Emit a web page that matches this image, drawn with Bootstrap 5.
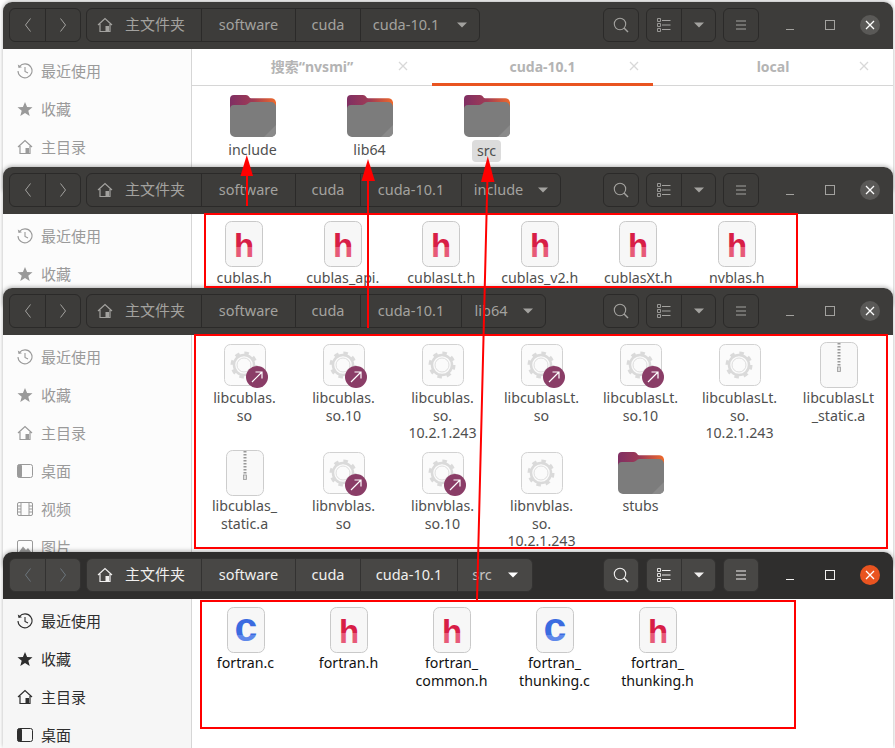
<!DOCTYPE html>
<html lang="zh">
<head>
<meta charset="utf-8">
<title>文件</title>
<link rel="stylesheet" href="https://cdn.jsdelivr.net/npm/bootstrap@5.3.0/dist/css/bootstrap.min.css">
<style>
html,body{margin:0;background:#fff;overflow:hidden}
body{font-family:"Noto Sans","Noto Sans CJK SC",sans-serif;font-size:14px;line-height:17px}
.desk{position:relative;width:895px;height:748px;overflow:hidden;background:#fff}
.win{position:absolute;left:3px;width:890px;overflow:hidden;border-radius:9px 9px 0 0;box-shadow:0 -1px 4px rgba(0,0,0,.3);background:#fff}
.w1{top:2px;height:190px}.w2{top:167px;height:140px}.w3{top:288px;height:280px}.w4{top:552px;height:196px}
.bar{height:47px;background:#3d3c3a;color:#a3a29f;padding:0 0 2px 6px;font-size:14.5px}
.w4 .bar{background:#2f2e2d;color:#f0efee}
.grp{height:34px;border:1px solid #2b2a29;border-radius:6px;overflow:hidden;flex:none}
.w4 .grp{background:#484745;border-color:#333231}
.cell{height:100%;border-left:1px solid #2b2a29;flex:none}
.cell:first-child{border-left:0}
.w4 .cell{border-left-color:#333231}
.navb{width:35px}
.pathg{margin-left:5px}
.s-home{width:114px;gap:4px;padding-left:10px;}.s-home span{font-size:15px}
.s-soft{width:94px}.s-cuda{width:65px}.s-ver{width:101px}
.w1 .s-ver{width:119px;gap:18px}.w4 .s-ver{width:97px}
.s-inc{width:99px;gap:15px}.s-lib{width:84px;gap:15px}.s-src{width:75px;gap:16px}
.w4 .s-src{color:#c4c3c1}
.tool{margin-left:7px}.tool1{margin-left:auto}
.btn1{width:34px}
.wctl{width:40px;flex:none}
.ctls{margin-left:11px;margin-right:3px}
.shot{background:#5a5957;border-radius:50%;width:20px;height:20px}
.w4 .shot{background:#e95420}
.side{width:189px;flex:none;background:#fcfcfc;border-right:1px solid #d6d6d6;color:#9a9a9a;padding:3px 0 0 14px}
.w4 .side{background:#f6f6f6;color:#2e2e2e}
.sitem{height:38px;gap:8px;font-size:15px;flex:none}
.sitem svg{flex:none}
.wbody{height:calc(100% - 47px)}
.tabs{height:37px;color:#b4b4b4;font-weight:700;border-bottom:1px solid #d6d6d6}
.tabi{width:240px;position:relative;flex:none;padding-bottom:2px}
.tabi.on{width:221px;border-bottom:3px solid #e95420;height:37px;padding-bottom:0}
.tabx{position:absolute;right:24px;top:12px}
.tabi.on .tabx{right:14px}
.files{display:grid;padding:6px 0 0 3px;color:#4f4f4f;font-size:14.2px;line-height:17.5px}
.w4 .files{color:#111;padding:7px 0 0 2px}
.c117{grid-template-columns:repeat(3,117px);padding-left:2px}
.c98{grid-template-columns:repeat(6,98.5px)}
.c99{grid-template-columns:repeat(7,99px);row-gap:7.500px}
.c103{grid-template-columns:repeat(5,103px)}
.fitem{text-align:center;white-space:nowrap}
.fitem span.lbl{position:relative}
.fitem svg{display:block;margin:0 auto 1px}
.c99 .fitem svg{margin-bottom:0}
.w4 .fitem svg{margin-bottom:0}
.picked{background:#dcdcdc;border-radius:4px;padding:2px 5px;margin-top:-1px;display:inline-block}
.marks{position:absolute;left:0;top:0;z-index:5;pointer-events:none}
</style>
</head>
<body>
<svg width="0" height="0" class="position-absolute">
<defs>
<linearGradient id="gh" gradientUnits="userSpaceOnUse" x1="0" y1="0" x2="0" y2="48"><stop offset=".56" stop-color="#d81e46"/><stop offset=".56" stop-color="#e75a78"/></linearGradient>
<linearGradient id="gc" gradientUnits="userSpaceOnUse" x1="0" y1="0" x2="0" y2="48"><stop offset=".6" stop-color="#3b6be0"/><stop offset=".6" stop-color="#5f88ea"/></linearGradient>
<linearGradient id="gtop" x1="0" y1="0" x2="1" y2="0"><stop offset="0" stop-color="#7f2f63"/><stop offset=".5" stop-color="#a03b55"/><stop offset="1" stop-color="#ef6a2b"/></linearGradient>
<symbol id="i-h" viewBox="0 0 48 48"><rect x="5.5" y="1.5" width="37" height="45" rx="6" fill="#f7f7f7" stroke="#c9c9c9"/><text x="24" y="36.5" text-anchor="middle" font-family="Liberation Sans" font-weight="700" font-size="33" fill="url(#gh)">h</text></symbol>
<symbol id="i-c" viewBox="0 0 48 48"><rect x="5.5" y="1.5" width="37" height="45" rx="6" fill="#f7f7f7" stroke="#c9c9c9"/><text x="24" y="34.5" text-anchor="middle" font-family="Liberation Sans" font-weight="700" font-size="41" fill="url(#gc)">c</text></symbol>
<symbol id="i-so" viewBox="0 0 48 48"><rect x="3.5" y="3.5" width="41" height="41" rx="6" fill="#fbfbfb" stroke="#d2d2d2"/><circle cx="23" cy="24" r="12" fill="none" stroke="#dadada" stroke-width="3" stroke-dasharray="4.500 4.925"/><circle cx="23" cy="24" r="10" fill="none" stroke="#dadada" stroke-width="2.500"/><circle cx="23" cy="24" r="7" fill="#fbfbfb" stroke="#dedede"/></symbol>
<symbol id="i-ln" viewBox="0 0 48 48"><use href="#i-so"/><circle cx="36" cy="36" r="11" fill="#8a3d67"/><path d="M31 41 41 31M34.500 31H41V37.500" fill="none" stroke="#fff" stroke-width="1.200"/></symbol>
<symbol id="i-zip" viewBox="0 0 48 48"><rect x="5.500" y="1.500" width="37" height="45" rx="6" fill="#f9f9f9" stroke="#cdcdcd"/><path d="M24 2V26" stroke="#999" stroke-width="3" stroke-dasharray="1.500 1.500"/><rect x="22.500" y="26" width="3" height="4.500" fill="#ddd" stroke="#999" stroke-width=".8"/></symbol>
<symbol id="i-dir" viewBox="0 0 48 48"><path d="M1 7a4 4 0 0 1 4-4h12c3 0 3 3 5 3.300h20a5 5 0 0 1 5 4V20H1Z" fill="url(#gtop)"/><path d="M1 17a4 4 0 0 1 4-4h11c3 0 4-3 6-3h20a5 5 0 0 1 5 5v25a5 5 0 0 1-5 5H6a5 5 0 0 1-5-5Z" fill="#7c7c7c"/><path d="M47 33V40a5 5 0 0 1-5 5H35Z" fill="#8a8a8a"/></symbol>
<symbol id="i-home" viewBox="0 0 16 16"><path d="M1 8 8 1.500 15 8M3 7V14.500H13V7" fill="none" stroke="currentColor" stroke-width="1.200"/><rect x="8.500" y="9" width="3.500" height="5.500" fill="currentColor"/></symbol>
<symbol id="i-clock" viewBox="0 0 16 16"><path d="M2.500 3.500A7 7 0 1 1 1 8" fill="none" stroke="currentColor" stroke-width="1.100"/><path d="M.8 1.500 1.500 5 5 4.300Z" fill="currentColor"/><path d="M8 4V8.500L11 10" fill="none" stroke="currentColor" stroke-width="1.100"/></symbol>
<symbol id="i-star" viewBox="0 0 16 16"><path d="M8 1 10.100 6 15.500 6.300 11.300 9.800 12.700 15 8 12.100 3.300 15 4.700 9.800 .5 6.300 5.900 6Z" fill="currentColor"/></symbol>
<symbol id="i-desk" viewBox="0 0 16 16"><rect x=".5" y="1.500" width="15" height="13" rx="2" fill="none" stroke="currentColor"/><rect x=".5" y="1.500" width="4.500" height="13" rx="1.500" fill="currentColor"/></symbol>
<symbol id="i-vid" viewBox="0 0 16 16"><rect x=".5" y="1.500" width="15" height="13" rx="1.500" fill="none" stroke="currentColor"/><path d="M4 2V14M12 2V14M.5 5H4M.5 8H4M.5 11H4M12 5H15.500M12 8H15.500M12 11H15.500" stroke="currentColor" fill="none"/></symbol>
<symbol id="i-pic" viewBox="0 0 16 16"><rect x=".5" y="1.500" width="15" height="13" rx="1.500" fill="none" stroke="currentColor"/><path d="M2 13 6 7.500 9 11 11 9 14 13Z" fill="currentColor"/></symbol>
<symbol id="i-back" viewBox="0 0 16 16"><path d="M10.500 1.500 5.500 8 10.500 14.500" fill="none" stroke="currentColor"/></symbol>
<symbol id="i-fwd" viewBox="0 0 16 16"><path d="M5.500 1.500 10.500 8 5.500 14.500" fill="none" stroke="currentColor"/></symbol>
<symbol id="i-find" viewBox="0 0 16 16"><circle cx="7" cy="7" r="5.700" fill="none" stroke="currentColor" stroke-width="1.100"/><path d="M11 11 15 15" stroke="currentColor" stroke-width="1.500"/></symbol>
<symbol id="i-list" viewBox="0 0 14 14"><path d="M5 2.500H13.500M5 7H13.500M5 11.500H13.500" stroke="currentColor"/><path d="M.5.500H3.500V3.500H.5ZM.5 5.500H3.500V8.500H.5ZM.5 10.500H3.500V13.500H.5Z" fill="none" stroke="currentColor" stroke-width=".9"/></symbol>
<symbol id="i-cart" viewBox="0 0 10 6"><path d="M0 .5H10L5 5.500Z" fill="currentColor"/></symbol>
<symbol id="i-menu" viewBox="0 0 12 12"><path d="M1 2H11M1 6H11M1 10H11" stroke="currentColor" fill="none"/></symbol>
<symbol id="i-min" viewBox="0 0 10 10"><path d="M1 9.500H9" stroke="currentColor" fill="none"/></symbol>
<symbol id="i-max" viewBox="0 0 10 10"><rect x=".5" y=".5" width="9" height="9" fill="none" stroke="currentColor"/></symbol>
<symbol id="i-x" viewBox="0 0 10 10"><path d="M1 1 9 9M9 1 1 9" stroke="currentColor" stroke-width="1.300" fill="none"/></symbol>
</defs>
</svg>

<div class="desk">

<!-- window 1 -->
<section class="win w1">
 <header class="bar d-flex align-items-center">
  <div class="grp d-flex">
   <div class="cell navb d-flex align-items-center justify-content-center"><svg width="16" height="16"><use href="#i-back"/></svg></div>
   <div class="cell navb d-flex align-items-center justify-content-center"><svg width="16" height="16"><use href="#i-fwd"/></svg></div>
  </div>
  <div class="grp pathg d-flex">
   <div class="cell s-home d-flex align-items-center"><svg width="16" height="16"><use href="#i-home"/></svg><span class="ms-2">主文件夹</span></div>
   <div class="cell s-soft d-flex align-items-center justify-content-center">software</div>
   <div class="cell s-cuda d-flex align-items-center justify-content-center">cuda</div>
   <div class="cell s-ver d-flex align-items-center justify-content-center">cuda-10.1<svg width="10" height="6"><use href="#i-cart"/></svg></div>
  </div>
  <div class="grp tool tool1 d-flex"><div class="cell btn1 d-flex align-items-center justify-content-center"><svg width="16" height="16"><use href="#i-find"/></svg></div></div>
  <div class="grp tool d-flex"><div class="cell btn1 d-flex align-items-center justify-content-center"><svg width="14" height="14"><use href="#i-list"/></svg></div><div class="cell btn1 d-flex align-items-center justify-content-center"><svg width="10" height="6"><use href="#i-cart"/></svg></div></div>
  <div class="grp tool d-flex"><div class="cell btn1 d-flex align-items-center justify-content-center"><svg width="12" height="12"><use href="#i-menu"/></svg></div></div>
  <div class="ctls d-flex align-items-center">
   <div class="wctl d-flex justify-content-center"><svg width="10" height="10"><use href="#i-min"/></svg></div>
   <div class="wctl d-flex justify-content-center"><svg width="10" height="10"><use href="#i-max"/></svg></div>
   <div class="wctl d-flex justify-content-center"><div class="shot d-flex align-items-center justify-content-center text-white"><svg width="10" height="10"><use href="#i-x"/></svg></div></div>
  </div>
 </header>
 <div class="wbody d-flex">
  <nav class="side d-flex flex-column">
   <div class="sitem d-flex align-items-center"><svg width="16" height="16"><use href="#i-clock"/></svg>最近使用</div>
   <div class="sitem d-flex align-items-center"><svg width="16" height="16"><use href="#i-star"/></svg>收藏</div>
   <div class="sitem d-flex align-items-center"><svg width="16" height="16"><use href="#i-home"/></svg>主目录</div>
  </nav>
  <main class="flex-grow-1">
   <div class="tabs d-flex">
    <div class="tabi d-flex align-items-center justify-content-center">搜索“nvsmi”<svg class="tabx" width="10" height="10" color="#d8d8d8"><use href="#i-x"/></svg></div>
    <div class="tabi on d-flex align-items-center justify-content-center">cuda-10.1<svg class="tabx" width="10" height="10" color="#d8d8d8"><use href="#i-x"/></svg></div>
    <div class="tabi d-flex align-items-center justify-content-center">local<svg class="tabx" width="10" height="10" color="#d8d8d8"><use href="#i-x"/></svg></div>
   </div>
   <div class="files c117">
    <div class="fitem"><svg width="48" height="48"><use href="#i-dir"/></svg>include</div>
    <div class="fitem"><svg width="48" height="48"><use href="#i-dir"/></svg>lib64</div>
    <div class="fitem"><svg width="48" height="48"><use href="#i-dir"/></svg><span class="picked">src</span></div>
   </div>
  </main>
 </div>
</section>

<!-- window 2 -->
<section class="win w2">
 <header class="bar d-flex align-items-center">
  <div class="grp d-flex">
   <div class="cell navb d-flex align-items-center justify-content-center"><svg width="16" height="16"><use href="#i-back"/></svg></div>
   <div class="cell navb d-flex align-items-center justify-content-center"><svg width="16" height="16"><use href="#i-fwd"/></svg></div>
  </div>
  <div class="grp pathg d-flex">
   <div class="cell s-home d-flex align-items-center"><svg width="16" height="16"><use href="#i-home"/></svg><span class="ms-2">主文件夹</span></div>
   <div class="cell s-soft d-flex align-items-center justify-content-center">software</div>
   <div class="cell s-cuda d-flex align-items-center justify-content-center">cuda</div>
   <div class="cell s-ver d-flex align-items-center justify-content-center">cuda-10.1</div>
   <div class="cell s-inc d-flex align-items-center justify-content-center">include<svg width="10" height="6"><use href="#i-cart"/></svg></div>
  </div>
  <div class="grp tool tool1 d-flex"><div class="cell btn1 d-flex align-items-center justify-content-center"><svg width="16" height="16"><use href="#i-find"/></svg></div></div>
  <div class="grp tool d-flex"><div class="cell btn1 d-flex align-items-center justify-content-center"><svg width="14" height="14"><use href="#i-list"/></svg></div><div class="cell btn1 d-flex align-items-center justify-content-center"><svg width="10" height="6"><use href="#i-cart"/></svg></div></div>
  <div class="grp tool d-flex"><div class="cell btn1 d-flex align-items-center justify-content-center"><svg width="12" height="12"><use href="#i-menu"/></svg></div></div>
  <div class="ctls d-flex align-items-center">
   <div class="wctl d-flex justify-content-center"><svg width="10" height="10"><use href="#i-min"/></svg></div>
   <div class="wctl d-flex justify-content-center"><svg width="10" height="10"><use href="#i-max"/></svg></div>
   <div class="wctl d-flex justify-content-center"><div class="shot d-flex align-items-center justify-content-center text-white"><svg width="10" height="10"><use href="#i-x"/></svg></div></div>
  </div>
 </header>
 <div class="wbody d-flex">
  <nav class="side d-flex flex-column">
   <div class="sitem d-flex align-items-center"><svg width="16" height="16"><use href="#i-clock"/></svg>最近使用</div>
   <div class="sitem d-flex align-items-center"><svg width="16" height="16"><use href="#i-star"/></svg>收藏</div>
  </nav>
  <main class="flex-grow-1">
   <div class="files c98">
    <div class="fitem"><svg width="48" height="48"><use href="#i-h"/></svg>cublas.h</div>
    <div class="fitem"><svg width="48" height="48"><use href="#i-h"/></svg>cublas_api.</div>
    <div class="fitem"><svg width="48" height="48"><use href="#i-h"/></svg>cublasLt.h</div>
    <div class="fitem"><svg width="48" height="48"><use href="#i-h"/></svg>cublas_v2.h</div>
    <div class="fitem"><svg width="48" height="48"><use href="#i-h"/></svg>cublasXt.h</div>
    <div class="fitem"><svg width="48" height="48"><use href="#i-h"/></svg>nvblas.h</div>
   </div>
  </main>
 </div>
</section>

<!-- window 3 -->
<section class="win w3">
 <header class="bar d-flex align-items-center">
  <div class="grp d-flex">
   <div class="cell navb d-flex align-items-center justify-content-center"><svg width="16" height="16"><use href="#i-back"/></svg></div>
   <div class="cell navb d-flex align-items-center justify-content-center"><svg width="16" height="16"><use href="#i-fwd"/></svg></div>
  </div>
  <div class="grp pathg d-flex">
   <div class="cell s-home d-flex align-items-center"><svg width="16" height="16"><use href="#i-home"/></svg><span class="ms-2">主文件夹</span></div>
   <div class="cell s-soft d-flex align-items-center justify-content-center">software</div>
   <div class="cell s-cuda d-flex align-items-center justify-content-center">cuda</div>
   <div class="cell s-ver d-flex align-items-center justify-content-center">cuda-10.1</div>
   <div class="cell s-lib d-flex align-items-center justify-content-center">lib64<svg width="10" height="6"><use href="#i-cart"/></svg></div>
  </div>
  <div class="grp tool tool1 d-flex"><div class="cell btn1 d-flex align-items-center justify-content-center"><svg width="16" height="16"><use href="#i-find"/></svg></div></div>
  <div class="grp tool d-flex"><div class="cell btn1 d-flex align-items-center justify-content-center"><svg width="14" height="14"><use href="#i-list"/></svg></div><div class="cell btn1 d-flex align-items-center justify-content-center"><svg width="10" height="6"><use href="#i-cart"/></svg></div></div>
  <div class="grp tool d-flex"><div class="cell btn1 d-flex align-items-center justify-content-center"><svg width="12" height="12"><use href="#i-menu"/></svg></div></div>
  <div class="ctls d-flex align-items-center">
   <div class="wctl d-flex justify-content-center"><svg width="10" height="10"><use href="#i-min"/></svg></div>
   <div class="wctl d-flex justify-content-center"><svg width="10" height="10"><use href="#i-max"/></svg></div>
   <div class="wctl d-flex justify-content-center"><div class="shot d-flex align-items-center justify-content-center text-white"><svg width="10" height="10"><use href="#i-x"/></svg></div></div>
  </div>
 </header>
 <div class="wbody d-flex">
  <nav class="side d-flex flex-column">
   <div class="sitem d-flex align-items-center"><svg width="16" height="16"><use href="#i-clock"/></svg>最近使用</div>
   <div class="sitem d-flex align-items-center"><svg width="16" height="16"><use href="#i-star"/></svg>收藏</div>
   <div class="sitem d-flex align-items-center"><svg width="16" height="16"><use href="#i-home"/></svg>主目录</div>
   <div class="sitem d-flex align-items-center"><svg width="16" height="16"><use href="#i-desk"/></svg>桌面</div>
   <div class="sitem d-flex align-items-center"><svg width="16" height="16"><use href="#i-vid"/></svg>视频</div>
   <div class="sitem d-flex align-items-center"><svg width="16" height="16"><use href="#i-pic"/></svg>图片</div>
  </nav>
  <main class="flex-grow-1">
   <div class="files c99">
    <div class="fitem"><svg width="48" height="48"><use href="#i-ln"/></svg>libcublas.<br>so</div>
    <div class="fitem"><svg width="48" height="48"><use href="#i-ln"/></svg>libcublas.<br>so.10</div>
    <div class="fitem"><svg width="48" height="48"><use href="#i-so"/></svg>libcublas.<br>so.<br>10.2.1.243</div>
    <div class="fitem"><svg width="48" height="48"><use href="#i-ln"/></svg>libcublasLt.<br>so</div>
    <div class="fitem"><svg width="48" height="48"><use href="#i-ln"/></svg>libcublasLt.<br>so.10</div>
    <div class="fitem"><svg width="48" height="48"><use href="#i-so"/></svg>libcublasLt.<br>so.<br>10.2.1.243</div>
    <div class="fitem"><svg width="48" height="48"><use href="#i-zip"/></svg>libcublasLt<br>_static.a</div>
    <div class="fitem"><svg width="48" height="48"><use href="#i-zip"/></svg>libcublas_<br>static.a</div>
    <div class="fitem"><svg width="48" height="48"><use href="#i-ln"/></svg>libnvblas.<br>so</div>
    <div class="fitem"><svg width="48" height="48"><use href="#i-ln"/></svg>libnvblas.<br>so.10</div>
    <div class="fitem"><svg width="48" height="48"><use href="#i-so"/></svg>libnvblas.<br>so.<br>10.2.1.243</div>
    <div class="fitem"><svg width="48" height="48"><use href="#i-dir"/></svg>stubs</div>
   </div>
  </main>
 </div>
</section>

<!-- window 4 (focused) -->
<section class="win w4">
 <header class="bar d-flex align-items-center">
  <div class="grp d-flex">
   <div class="cell navb d-flex align-items-center justify-content-center text-secondary"><svg width="16" height="16"><use href="#i-back"/></svg></div>
   <div class="cell navb d-flex align-items-center justify-content-center text-secondary"><svg width="16" height="16"><use href="#i-fwd"/></svg></div>
  </div>
  <div class="grp pathg d-flex">
   <div class="cell s-home d-flex align-items-center"><svg width="16" height="16"><use href="#i-home"/></svg><span class="ms-2">主文件夹</span></div>
   <div class="cell s-soft d-flex align-items-center justify-content-center">software</div>
   <div class="cell s-cuda d-flex align-items-center justify-content-center">cuda</div>
   <div class="cell s-ver d-flex align-items-center justify-content-center">cuda-10.1</div>
   <div class="cell s-src d-flex align-items-center justify-content-center">src<svg class="text-white" width="10" height="6"><use href="#i-cart"/></svg></div>
  </div>
  <div class="grp tool tool1 d-flex"><div class="cell btn1 d-flex align-items-center justify-content-center"><svg width="16" height="16"><use href="#i-find"/></svg></div></div>
  <div class="grp tool d-flex"><div class="cell btn1 d-flex align-items-center justify-content-center"><svg width="14" height="14"><use href="#i-list"/></svg></div><div class="cell btn1 d-flex align-items-center justify-content-center"><svg width="10" height="6"><use href="#i-cart"/></svg></div></div>
  <div class="grp tool d-flex"><div class="cell btn1 d-flex align-items-center justify-content-center"><svg width="12" height="12"><use href="#i-menu"/></svg></div></div>
  <div class="ctls d-flex align-items-center">
   <div class="wctl d-flex justify-content-center"><svg width="10" height="10"><use href="#i-min"/></svg></div>
   <div class="wctl d-flex justify-content-center"><svg width="10" height="10"><use href="#i-max"/></svg></div>
   <div class="wctl d-flex justify-content-center"><div class="shot d-flex align-items-center justify-content-center text-white"><svg width="10" height="10"><use href="#i-x"/></svg></div></div>
  </div>
 </header>
 <div class="wbody d-flex">
  <nav class="side d-flex flex-column">
   <div class="sitem d-flex align-items-center"><svg width="16" height="16"><use href="#i-clock"/></svg>最近使用</div>
   <div class="sitem d-flex align-items-center"><svg width="16" height="16"><use href="#i-star"/></svg>收藏</div>
   <div class="sitem d-flex align-items-center"><svg width="16" height="16"><use href="#i-home"/></svg>主目录</div>
   <div class="sitem d-flex align-items-center"><svg width="16" height="16"><use href="#i-desk"/></svg>桌面</div>
  </nav>
  <main class="flex-grow-1">
   <div class="files c103">
    <div class="fitem"><svg width="48" height="48"><use href="#i-c"/></svg>fortran.c</div>
    <div class="fitem"><svg width="48" height="48"><use href="#i-h"/></svg>fortran.h</div>
    <div class="fitem"><svg width="48" height="48"><use href="#i-h"/></svg>fortran_<br>common.h</div>
    <div class="fitem"><svg width="48" height="48"><use href="#i-c"/></svg>fortran_<br>thunking.c</div>
    <div class="fitem"><svg width="48" height="48"><use href="#i-h"/></svg>fortran_<br>thunking.h</div>
   </div>
  </main>
 </div>
</section>

<svg class="marks" width="895" height="748" fill="none" stroke="#f00" stroke-width="2">
 <rect x="205" y="214" width="592" height="73"/>
 <rect x="195" y="335" width="692" height="213"/>
 <rect x="201" y="601" width="594" height="127"/>
 <path d="M247 206V170M368 328V175M477 601 487.500 176"/>
 <path d="M246.800 155 240.500 176H253Z" fill="#f00" stroke="none"/>
 <path d="M368 159 361.500 181H375Z" fill="#f00" stroke="none"/>
 <path d="M487.800 156 481 182H494.500Z" fill="#f00" stroke="none"/>
</svg>
</div>
</body>
</html>
